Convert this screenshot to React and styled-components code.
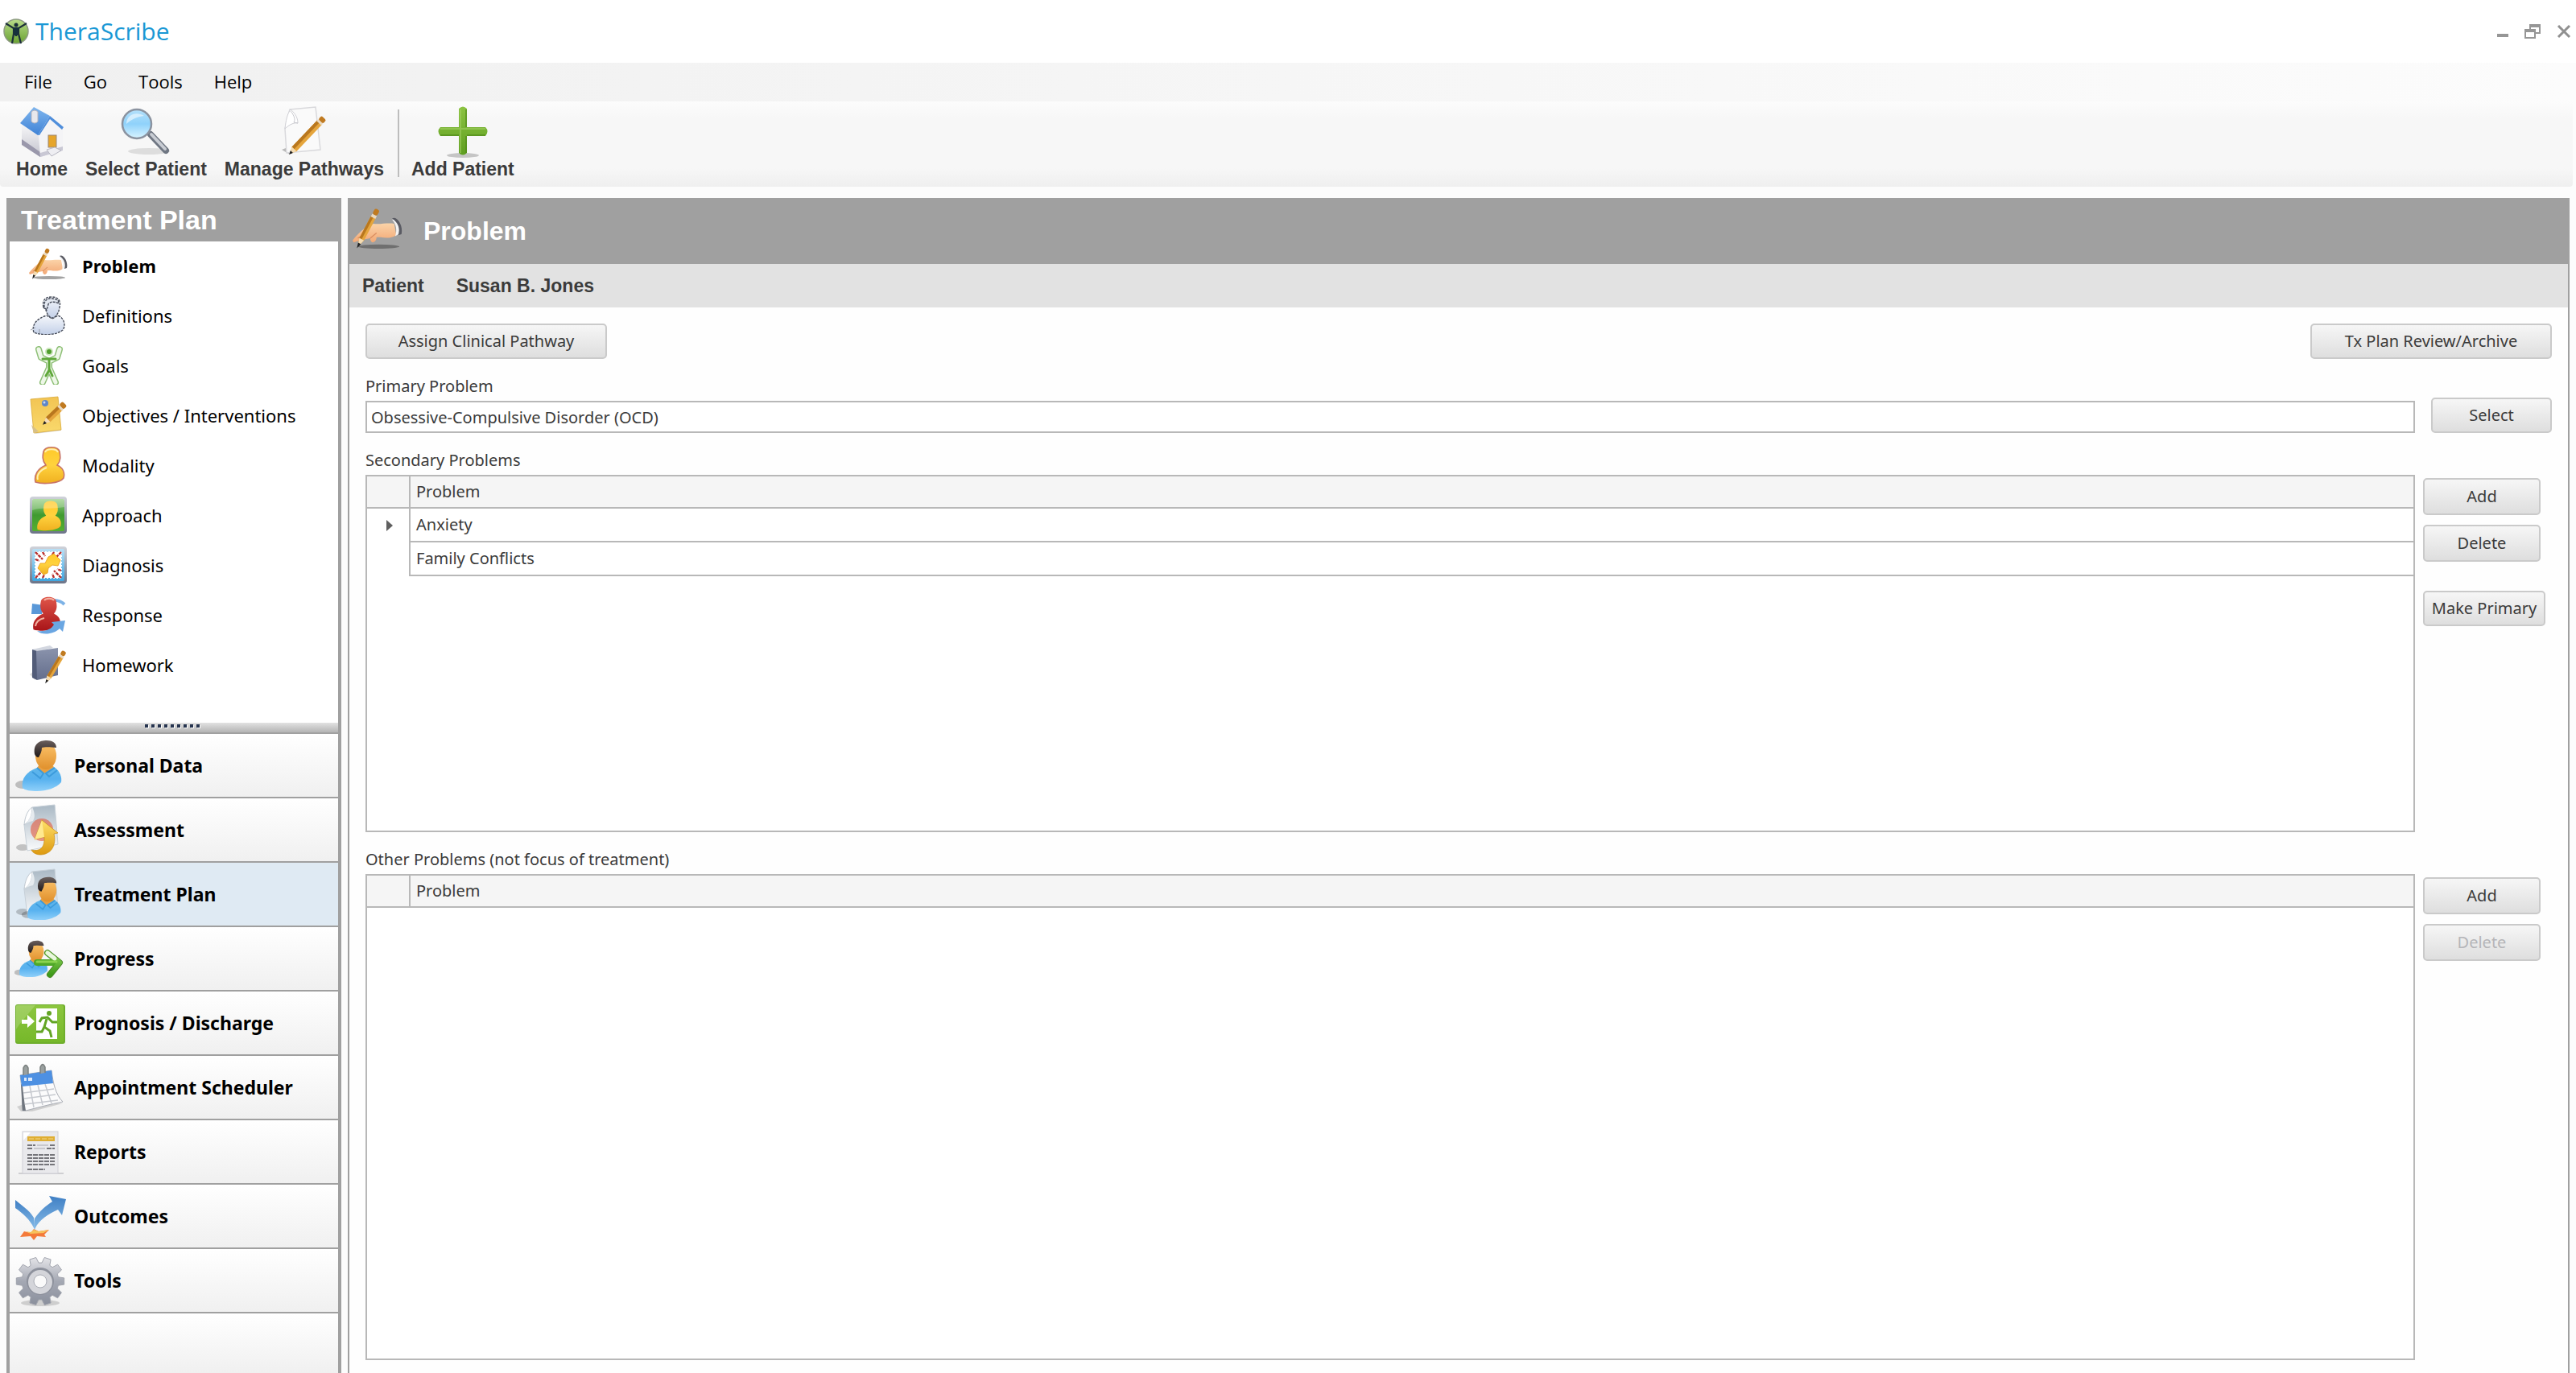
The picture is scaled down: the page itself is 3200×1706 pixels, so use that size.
import React from "react";
import styled, { createGlobalStyle, css } from "styled-components";

const GlobalStyle = createGlobalStyle`
  *, *::before, *::after { box-sizing: border-box; }
  body { margin: 0; background: #fcfcfc; }
  button, input { font: inherit; color: inherit; }
`;

const ui = '"Noto Sans", "Open Sans", sans-serif';
const arial = '"Liberation Sans", Arial, sans-serif';
const segoe = '"Open Sans", "Noto Sans", sans-serif';
const frame = "#a0a0a0";
const line = "#b8b8b8";

const Page = styled.div`
  min-height: 100vh;
  display: flex;
  flex-direction: column;
  background: #fcfcfc;
  font-family: ${ui};
  font-size: 20px;
  line-height: 28px;
  color: #3b3b3b;
`;

/* ---------- window chrome ---------- */
const TitleBar = styled.header`
  height: 78px;
  padding: 0 6px 0 4px;
  display: flex;
  align-items: center;
  gap: 8px;
  background: #fff;
`;
const AppName = styled.h1`
  margin: 0;
  flex: 1;
  font: 400 30px/40px ${segoe};
  color: #1a98d5;
`;
const WindowControls = styled.div`
  display: flex;
  gap: 20px;
`;
const WindowButton = styled.button`
  display: flex;
  padding: 0;
  border: 0;
  background: none;
`;
const MenuBar = styled.nav`
  height: 48px;
  padding: 0 0 2px 30px;
  display: flex;
  align-items: center;
  gap: 39px;
  background: linear-gradient(90deg, #f0f0f0, #fcfcfc);
`;
const MenuItem = styled.button`
  padding: 0;
  border: 0;
  background: none;
  font: 400 22px/30px ${segoe};
  color: #000;
`;
const ToolBar = styled.div`
  height: 106px;
  margin-right: 4px;
  padding: 6px 0 8px 9px;
  display: flex;
  border-radius: 0 0 4px 4px;
  background: linear-gradient(#fcfcfc, #f7f7f7 20%, #f7f7f7 78%, #efefef);
`;
const ToolButton = styled.button`
  padding: 0 11px;
  border: 0;
  background: none;
  display: flex;
  flex-direction: column;
  align-items: center;
  font: 700 23px/28px ${arial};
  color: #3b3b3b;
`;
const ToolDivider = styled.div`
  width: 2px;
  margin: 4px 4px 4px 6px;
  background: #bdbdbd;
`;

/* ---------- body ---------- */
const Workspace = styled.div`
  flex: 1;
  display: flex;
  gap: 8px;
  padding: 14px 8px 0;
`;
const Sidebar = styled.aside`
  width: 416px;
  display: flex;
  flex-direction: column;
  border: solid ${frame};
  border-width: 0 4px;
`;
const SidebarTitle = styled.h2`
  margin: 0;
  padding-left: 14px;
  background: ${frame};
  font: 700 34px/54px ${arial};
  color: #fff;
`;
const SectionList = styled.nav`
  height: 598px;
  background: #fff;
`;
const SectionItem = styled.button`
  width: 100%;
  height: 62px;
  padding: 0 0 2px 24px;
  border: 0;
  background: none;
  display: flex;
  align-items: center;
  gap: 18px;
  font: ${(p) => (p.$current ? 700 : 400)} 22px/28px ${ui};
  color: #000;
`;
const Splitter = styled.div`
  height: 14px;
  display: flex;
  justify-content: center;
  padding: 2px 4px 0 0;
  gap: 4px;
  border-bottom: 2px solid ${frame};
  background: linear-gradient(#e2e2e2, #b4b4b4);
`;
const Grip = styled.i`
  width: 4px;
  height: 4px;
  background: #26344f;
  box-shadow: 1px 1px 0 #fff;
`;
const ModuleItem = styled.button`
  width: 100%;
  height: 80px;
  padding: 0 0 0 6px;
  border: 0;
  border-bottom: 2px solid ${frame};
  background: ${(p) => (p.$current ? "#dfeaf3" : "linear-gradient(#fff, #f0f0f0)")};
  display: flex;
  align-items: center;
  gap: 10px;
  font: 700 23px/28px ${ui};
  color: #000;
`;
const SidebarFill = styled.div`
  flex: 1;
  background: linear-gradient(#fff, #f0f0f0);
`;

const Panel = styled.main`
  flex: 1;
  min-width: 0;
  display: flex;
  flex-direction: column;
  border: solid ${frame};
  border-width: 0 2px;
  background: #fefefe;
`;
const PanelHeader = styled.div`
  height: 82px;
  padding-left: 4px;
  display: flex;
  align-items: center;
  gap: 26px;
  background: ${frame};
`;
const PanelTitle = styled.h2`
  margin: 0;
  font: 700 32px/40px ${arial};
  color: #fff;
`;
const PatientBar = styled.div`
  height: 54px;
  padding-left: 16px;
  display: flex;
  align-items: center;
  gap: 40px;
  background: #e2e2e2;
  font: 700 23px/28px ${arial};
`;
const PanelBody = styled.div`
  flex: 1;
  padding: 20px 20px 16px;
  display: flex;
  flex-direction: column;
  gap: 20px;
`;
const ActionRow = styled.div`
  display: flex;
  justify-content: space-between;
`;
const sizes = {
  wide: css`width: 300px; height: 44px;`,
  select: css`width: 150px; height: 44px;`,
  side: css`width: 146px; height: 46px;`,
  primary: css`width: 152px; height: 44px; margin-top: 24px;`,
};
const PushButton = styled.button`
  ${(p) => sizes[p.$size]}
  padding: 0;
  border: 2px solid #cacaca;
  border-radius: 5px;
  background: linear-gradient(#f6f6f6, #dedede);
  white-space: nowrap;
  &:disabled { color: #b5b5b8; }
`;
const Field = styled.div`
  display: flex;
  flex-direction: column;
`;
const FieldRow = styled.div`
  display: flex;
  align-items: flex-end;
  gap: 20px;
`;
const TextBox = styled.input`
  flex: 1;
  min-width: 0;
  height: 40px;
  padding: 0 5px;
  border: 2px solid ${line};
  background: #fff;
`;
const GridSection = styled.section`
  display: flex;
  flex-direction: column;
  gap: 4px;
  ${(p) => (p.$fill ? "flex: 1;" : "height: 476px;")}
`;
const GridTitle = styled.h3`
  margin: 0;
  font: inherit;
`;
const GridRow = styled.div`
  flex: 1;
  display: flex;
  gap: 10px;
`;
const GridFrame = styled.div`
  flex: 1;
  border: 2px solid ${line};
  background: #fff;
`;
const GridActions = styled.div`
  width: 160px;
  padding-top: 4px;
  display: flex;
  flex-direction: column;
  gap: 12px;
`;
const Table = styled.table`
  width: 100%;
  border-collapse: separate;
  border-spacing: 0;
  table-layout: fixed;
`;
const HeadCell = styled.th`
  width: ${(p) => (p.$marker ? "54px" : "auto")};
  height: 40px;
  padding: 0 7px;
  border-bottom: 2px solid ${line};
  border-right: ${(p) => (p.$marker ? `2px solid ${line}` : "0")};
  background: #f5f5f5;
  font-weight: 400;
  text-align: left;
`;
const MarkerCell = styled.td`
  height: 42px;
  padding: 0 0 0 24px;
  border-right: 2px solid ${line};
  line-height: 0;
`;
const Cell = styled.td`
  height: 42px;
  padding: 0 7px;
  border-bottom: 2px solid ${line};
`;

/* ---------- drawings ---------- */
const Svg = styled.svg`
  display: block;
  flex: none;
`;
const HiddenDefs = styled.svg`
  position: absolute;
  width: 0;
  height: 0;
`;

const G = ({ id, a, b, c, h }) => (
  <linearGradient id={id} x1="0" y1="0" x2={h ? "1" : "0"} y2={h ? "0" : "1"}>
    <stop offset="0" stopColor={a} />
    {c && <stop offset=".5" stopColor={c} />}
    <stop offset="1" stopColor={b} />
  </linearGradient>
);
const Gradients = () => (
  <HiddenDefs aria-hidden="true">
    <defs>
      <G id="skin" a="#fdc56c" b="#e0902c" />
      <G id="hair" a="#6b5f5c" b="#1f1a1b" />
      <G id="shirt" a="#5fb6ea" c="#57b1ef" b="#8fd0fa" />
      <G id="sheet" a="#a9b8c4" b="#fafbfc" />
      <G id="gold" a="#ffe06a" b="#dd9a10" />
      <G id="pawn" a="#ffc928" c="#ffd23e" b="#f0b020" />
      <G id="green" a="#8fd65a" b="#3d9a18" />
      <G id="exit" a="#8cc63f" b="#76b82a" />
      <G id="roof" a="#7fb6ee" b="#3f82d6" />
      <G id="wall" a="#ffffff" b="#c3c3cd" />
      <G id="blue" a="#3f7fc4" b="#86bbe8" />
      <G id="lens" a="#b5e0fa" c="#8fd2fb" b="#d9f4ff" />
      <G id="plus" a="#8cc342" b="#5f9e20" />
      <G id="gear" a="#e4e4e8" c="#a4a8b3" b="#8a8f9c" />
      <G id="hand" a="#fbd3a8" b="#f2a875" />
      <G id="ghost" a="#f5f7fb" b="#c3d0e8" />
      <G id="note" a="#f2c453" b="#f9d96c" />
      <G id="book" a="#8a93ac" b="#646e8c" />
      <G id="redPawn" a="#e0564a" b="#a81418" />
      <G id="tile" a="#9bd08a" c="#3f9a30" b="#55b030" />
      <G id="tileEdge" a="#d0d3da" b="#6c7488" />
      <G id="sky" a="#b9dff5" b="#3fa6e0" />
      <G id="badge" a="#b9dc8a" b="#6aa232" />
    </defs>
  </HiddenDefs>
);

const Icon = ({ size = 64, box = 64, children }) => (
  <Svg width={size} height={size} viewBox={`0 0 ${box} ${box}`} aria-hidden="true">
    {children}
  </Svg>
);

const Pencil = ({ x1, y1, x2, y2, w = 6 }) => {
  const len = Math.hypot(x2 - x1, y2 - y1);
  const deg = (Math.atan2(y2 - y1, x2 - x1) * 180) / Math.PI;
  const r = w / 2;
  return (
    <g transform={`translate(${x1} ${y1}) rotate(${deg})`}>
      <path d={`M6 ${-r}H${len - 8}L${len} 0L${len - 8} ${r}H6z`} fill="#e5a53c" />
      <path d={`M6 0H${len - 8}V${r}H6z`} fill="#b9771e" />
      <path d={`M${len - 8} ${-r}L${len} 0L${len - 8} ${r}z`} fill="#f4dcb4" />
      <path d={`M${len - 3} ${-r / 3}L${len} 0L${len - 3} ${r / 3}z`} fill="#222" stroke="#222" />
      <rect x="4" y={-r} width="3" height={w} fill="#e9d9c0" />
      <rect x="-2" y={-r} width="6" height={w} rx="2" fill="#c07a20" />
    </g>
  );
};

const Bust = () => (
  <>
    <ellipse cx="10" cy="56" rx="9" ry="5" fill="#000" opacity=".22" />
    <path d="M10 60C8 48 15 40 28 35L49 34C57 39 59 47 58 53C52 60 40 64 28 64C20 64 13 63 10 60z" fill="url(#shirt)" />
    <path d="M28 35L37 42L49 34L46 31H31z" fill="#e8a043" />
    <path d="M28 35L36 42L32 48L22 40M50 35L39 42L43 46L53 38" fill="none" stroke="#3c9bdc" strokeWidth="2" />
    <ellipse cx="39" cy="20" rx="13" ry="17" fill="url(#skin)" />
    <path d="M25 18C23 5 31 1 40 1C47 1 52 4 52 10C44 9 37 9 34 10C34 15 32 18 30 22C27 22 26 20 25 18z" fill="url(#hair)" />
  </>
);
const Leaf = () => (
  <>
    <ellipse cx="10" cy="54" rx="8" ry="4" fill="#000" opacity=".2" />
    <path d="M22 4L50 1L54 50L16 58L12 26z" fill="url(#sheet)" stroke="#c7d0d8" />
    <path d="M22 4C22 13 20 20 12 26C13 16 16 8 22 4z" fill="#fff" stroke="#c0c8d0" />
    <path d="M22 4C25 10 26 16 23 21C19 22 15 23 12 26C20 19 22 12 22 4z" fill="#e6ebef" />
  </>
);

const PersonIcon = () => (
  <Icon><Bust /></Icon>
);
const AssessmentIcon = () => (
  <Icon>
    <Leaf />
    <circle cx="34" cy="32" r="14" fill="#e2583c" opacity=".6" />
    <path d="M34 20L54 36L49 37C52 50 47 62 33 63C27 63 23 61 21 57C30 59 38 56 37 41L25 44z" fill="url(#gold)" stroke="#c98c14" strokeWidth=".7" />
    <path d="M34 20L37 41L25 44z" fill="#ffe98f" />
  </Icon>
);
const PlanIcon = () => (
  <Icon>
    <Leaf />
    <g transform="translate(8 10) scale(.85)"><Bust /></g>
  </Icon>
);
const ProgressIcon = () => (
  <Icon>
    <g transform="translate(-1 9) scale(.72)"><Bust /></g>
    <path d="M41 25L56 37L44 52" fill="none" stroke="#4d8a2c" strokeWidth="8" strokeLinecap="round" strokeLinejoin="round" />
    <path d="M28 37H54" stroke="#4fa828" strokeWidth="8" strokeLinecap="round" />
    <path d="M41 25L56 37L44 52" fill="none" stroke="url(#green)" strokeWidth="6" strokeLinecap="round" strokeLinejoin="round" />
    <path d="M41 25L50 32" stroke="#e9f7de" strokeWidth="5" strokeLinecap="round" />
    <path d="M28 36H52" stroke="#8bd34f" strokeWidth="3" strokeLinecap="round" />
  </Icon>
);
const ExitIcon = () => (
  <Icon>
    <rect x="1" y="9" width="62" height="49" rx="3" fill="#6fae2c" />
    <rect x="2" y="10" width="59" height="46" rx="2" fill="url(#exit)" />
    <path d="M2 10H26L6 34L2 40z" fill="#fff" opacity=".18" />
    <rect x="27" y="14" width="26" height="38" fill="#fff" />
    <path d="M9 28H16V22L25 30L16 38V33H9z" fill="#fff" />
    <circle cx="43" cy="20" r="3" fill="#63a524" />
    <path d="M31 31L34 26L41 25L47 31H53M40 27L37 37L44 42L46 50M37 37L34 43H27" fill="none" stroke="#63a524" strokeWidth="3" />
  </Icon>
);
const CalendarIcon = () => (
  <Icon>
    <path d="M3 56L14 52L60 52L22 62L8 62z" fill="#000" opacity=".14" />
    <path d="M7 17L46 11C48 27 51 41 60 50C44 53 30 57 14 61L10 61C10 46 9 31 7 17z" fill="#fbfbfc" stroke="#a9adb5" />
    <path d="M8 28C9 40 9 52 10 61L14 61C12 50 11 39 10 30z" fill="#70767f" />
    <path d="M7 17L46 11L48 27L9 31z" fill="#4d90e2" />
    <path d="M12 22H15M17 22H22" stroke="#dce9fb" strokeWidth="4" />
    <path d="M11 39L49 34M12 46L51 41M13 53L54 48M19 30L24 57M29 29L35 54M38 28L46 52" stroke="#c6c9cf" strokeWidth="1.5" fill="none" />
    <path d="M11 17V8Q14 1 17 8V16M32 15V7Q35 0 38 7V14" fill="#9aa09f" stroke="#7b807f" strokeWidth="1.5" />
  </Icon>
);
const ReportIcon = () => (
  <Icon>
    <path d="M5 59H61" stroke="#cfcfd2" strokeWidth="2" />
    <rect x="10" y="7" width="44" height="52" fill="#e9e9ec" stroke="#cfcfd6" />
    <path d="M11 8H20L11 18z" fill="#fff" />
    <rect x="16" y="13" width="34" height="6" fill="#dfae33" />
    <path d="M18 16H48" stroke="#f2d88f" strokeDasharray="6 2" />
    <g stroke="#75757a" strokeWidth="2">
      <path d="M16 24H26M44 24H50M16 28H22M40 28H50M16 36H50M16 40H50M16 44H50M16 48H50M16 54H38" strokeDasharray="6 1" />
    </g>
    <path d="M28 24H42M24 28H38" stroke="#bdbdc2" strokeWidth="1.5" />
  </Icon>
);
const OutcomesIcon = () => (
  <Icon>
    <path d="M7 58L12 51L20 53L24 48L30 51L43 49L37 55L39 58L28 57L24 62L20 57z" fill="#f47a3a" />
    <path d="M14 51L20 52L24 49L30 51L43 49L36 53L20 54z" fill="#f6c25c" />
    <path d="M1 12C9 19 18 24 24 34L25 49C20 37 11 29 1 22z" fill="url(#blue)" />
    <path d="M25 49C24 44 24 39 25 35C31 26 39 19 47 14L43 7L64 11L59 31L54 24C42 29 29 38 25 49z" fill="url(#blue)" />
  </Icon>
);
const gearPath = (cx, cy, teeth, outer, inner) =>
  Array.from({ length: teeth }, (_, i) => {
    const step = (Math.PI * 2) / teeth;
    const at = (r, t) => `${(cx + r * Math.cos(t)).toFixed(1)} ${(cy + r * Math.sin(t)).toFixed(1)}`;
    const t = i * step;
    return `${i ? "L" : "M"}${at(inner, t - step * 0.36)}L${at(outer, t - step * 0.22)}L${at(outer, t + step * 0.22)}L${at(inner, t + step * 0.36)}`;
  }).join("") + "z";
const GearIcon = () => (
  <Icon>
    <ellipse cx="32" cy="60" rx="24" ry="4" fill="#000" opacity=".15" />
    <path d={gearPath(32, 33, 10, 30, 23)} fill="url(#gear)" stroke="#a2a5ae" strokeLinejoin="round" />
    <circle cx="32" cy="33" r="17" fill="#8d919c" />
    <circle cx="32" cy="34" r="15" fill="#d4d5da" />
    <circle cx="32" cy="33" r="8" fill="#fafafa" stroke="#a9acb5" />
  </Icon>
);

const HandIcon = ({ size = 48 }) => (
  <Icon size={size} box={48}>
    <ellipse cx="25" cy="39" rx="20" ry="2" fill="#333" opacity=".45" />
    <path d="M0 33C4 28 9 23 14 20L20 17C26 18 33 16 40 17L42 28C38 31 32 31 27 30L23 30C23 33 21 35 19 35C17 34 17 32 17 31C12 32 6 33 1 35z" fill="url(#hand)" />
    <path d="M17 31L23 26M5 31L13 26" stroke="#d98d60" />
    <path d="M38 13C42 18 43 23 41 29L44 27C46 22 44 16 41 13z" fill="#f3f3f3" />
    <path d="M38 12C42 9 49 18 47 27L44 28C46 22 44 16 38 12z" fill="#5a5b63" />
    <Pencil x1={23} y1={5} x2={5} y2={39} w={5} />
  </Icon>
);
const GhostIcon = () => (
  <Icon size={48} box={48}>
    <g fill="url(#ghost)" stroke="#454b58" strokeWidth="1.4" strokeDasharray="3 1.2">
      <path d="M6 45C3 36 9 28 22 24L29 28L36 24C44 27 46 37 42 42C34 49 15 49 6 45z" />
      <path d="M18 14C16 4 21 1 28 1C36 1 40 5 38 14C37 21 33 27 29 27C25 27 22 21 21 17z" />
      <path d="M19 14C18 5 23 2 29 3C34 4 37 4 37 9C31 6 26 7 24 10L22 17z" fill="#e3e8f1" />
    </g>
    <path d="M2 42L8 39M13 46V41" stroke="#9aa0ab" />
  </Icon>
);
const GoalsIcon = () => (
  <Icon size={48} box={48}>
    <g fill="none" strokeLinecap="round" strokeLinejoin="round">
      <path d="M12 4L15 14L25 19L35 14L38 4M25 19V27L17 45M25 27L33 45" stroke="#8fc078" strokeWidth="8" />
      <path d="M12 4L15 14L25 19L35 14L38 4M25 19V27L17 45M25 27L33 45" stroke="#eef7e8" strokeWidth="5" />
      <path d="M17 16H33M25 17V30L21 37M25 28L29 37" stroke="#5fa83a" strokeWidth="3" />
    </g>
    <circle cx="25" cy="7" r="5" fill="#cbe6bb" />
    <circle cx="25" cy="7" r="3" fill="#4f9e2c" />
  </Icon>
);
const NoteIcon = () => (
  <Icon size={48} box={48}>
    <path d="M5 40L40 38L40 43L8 47z" fill="#000" opacity=".15" />
    <path d="M2 4L36 1L40 42L6 46z" fill="url(#note)" stroke="#d9a93a" strokeWidth=".8" />
    <path d="M3 36L6 46L12 44z" fill="#d7c089" />
    <circle cx="20" cy="9" r="4" fill="#5f86c8" />
    <circle cx="19" cy="8" r="1.5" fill="#c5d7f4" />
    <Pencil x1={43} y1={11} x2={18} y2={35} w={8} />
  </Icon>
);
const pawn = "M21 24C16 18 17 12 18 7C20 0 36 0 38 7C39 13 40 18 35 24C42 27 45 33 43 40C38 47 17 48 8 45C6 36 11 28 21 24z";
const ModalityIcon = () => (
  <Icon size={48} box={48}>
    <path d={pawn} fill="url(#pawn)" stroke="#c77468" strokeWidth="1.6" />
    <path d="M11 42C9 36 14 30 22 27M20 8C22 3 34 3 36 8" fill="none" stroke="#ffeeb0" strokeWidth="2" />
  </Icon>
);
const Tile = ({ fill }) => (
  <>
    <rect x="1" y="1" width="46" height="46" rx="4" fill="url(#tileEdge)" />
    <rect x="4" y="4" width="40" height="40" rx="2" fill={fill} />
  </>
);
const ApproachIcon = () => (
  <Icon size={48} box={48}>
    <Tile fill="url(#tile)" />
    <g transform="translate(4 5) scale(.82)"><path d={pawn} fill="url(#pawn)" /></g>
    <path d="M4 4H44V14C30 17 15 14 4 18z" fill="#fff" opacity=".25" />
  </Icon>
);
const DiagnosisIcon = () => (
  <Icon size={48} box={48}>
    <Tile fill="url(#sky)" />
    <rect x="8" y="8" width="32" height="32" fill="#fff" stroke="#fff" strokeWidth="2" strokeDasharray="2 2" />
    <g stroke="#b8302e" strokeWidth="2.4" strokeDasharray="4 1">
      <path d="M8 8L17 17M40 8L31 17M8 40L17 31M40 40L31 31M17 8L20 13M31 8L28 13M8 17L13 19M40 31L35 29M31 40L29 35M17 40L19 36" />
    </g>
    <path d="M24 14L31 10L39 18L36 25L29 24L24 28L23 34L18 36L11 28L14 22L20 22z" fill="url(#pawn)" stroke="#eda928" />
  </Icon>
);
const ResponseIcon = () => (
  <Icon size={48} box={48}>
    <path d="M44 11C38 5 26 3 15 12" fill="none" stroke="#7db2e6" strokeWidth="4" />
    <path d="M4 10L18 12L16 23L3 23z" fill="#5a98d8" />
    <g transform="translate(-2 0) scale(.94)"><path d={pawn} fill="url(#redPawn)" /></g>
    <path d="M19 6C21 3 29 3 31 6M8 38C9 32 14 29 19 28" fill="none" stroke="#f2b1a2" strokeWidth="2" />
    <path d="M10 44C20 45 28 42 31 36L28 33L45 31L42 45L38 41C31 48 17 50 10 44z" fill="#6aa6e2" />
  </Icon>
);
const HomeworkIcon = () => (
  <Icon size={48} box={48}>
    <path d="M1 36L8 30V43z" fill="#000" opacity=".15" />
    <path d="M4 5L26 0L30 3L10 8z" fill="#d3d7e0" />
    <path d="M4 5L10 7V43L4 40z" fill="#525c78" />
    <path d="M9 7L36 3V37L10 43z" fill="url(#book)" />
    <Pencil x1={43} y1={9} x2={21} y2={46} w={6} />
  </Icon>
);

const HomeIcon = () => (
  <Icon>
    <path d="M7 24L22 16L42 16L58 28V54L30 63L7 47z" fill="url(#wall)" />
    <path d="M7 41L30 57V63L7 48z" fill="#9a98ab" />
    <path d="M28 36L42 15L58 29V55L30 63z" fill="#f4f4f6" />
    <path d="M30 58L58 50V55L30 63z" fill="#c9c8d4" />
    <path d="M5 21L22 1L42 12L27 36z" fill="url(#roof)" />
    <path d="M42 12L59 26L57 29L42 16L29 36H27z" fill="#4f8edb" />
    <path d="M19 7Q23 3 27 7V19Q23 23 19 19z" fill="#e8e8ec" stroke="#b4b4be" />
    <rect x="40" y="36" width="10" height="15" fill="#e6a52a" stroke="#9a8878" />
    <path d="M38 54L48 51L56 55L44 62z" fill="#eeeef2" stroke="#b7b7c2" />
  </Icon>
);
const SearchIcon = () => (
  <Icon>
    <ellipse cx="36" cy="56" rx="26" ry="4" fill="#000" opacity=".1" />
    <path d="M38 35L57 55" stroke="#6f7682" strokeWidth="8" strokeLinecap="round" />
    <path d="M39 35L56 53" stroke="#c8ccd3" strokeWidth="4" strokeLinecap="round" />
    <ellipse cx="21" cy="22" rx="18" ry="18" fill="url(#lens)" stroke="#8b93a0" strokeWidth="2.5" />
    <path d="M8 22C8 10 21 6 30 12C21 13 13 17 8 22z" fill="#fff" opacity=".55" />
  </Icon>
);
const PathwayIcon = () => (
  <Icon>
    <path d="M4 54L14 50V60z" fill="#000" opacity=".25" />
    <path d="M14 4L46 1L52 54L10 58L8 28z" fill="#fafafa" stroke="#d9d9dc" strokeWidth="1.5" />
    <path d="M15 4C22 10 24 16 24 21C19 20 13 23 8 28C9 18 11 9 15 4z" fill="#fff" stroke="#cfcfd4" />
    <path d="M15 6C20 12 21 17 19 20L24 21" fill="none" stroke="#c7c7cc" />
    <Pencil x1={55} y1={16} x2={14} y2={59} w={8} />
  </Icon>
);
const PlusIcon = () => (
  <Icon>
    <ellipse cx="32" cy="61" rx="20" ry="3" fill="#000" opacity=".2" />
    <path d="M27 3Q32 -2 37 3V26H60Q65 31 60 37H37V58Q32 63 27 58V37H4Q-1 31 4 26H27z" fill="url(#plus)" />
    <path d="M29 4V58M4 28H60" stroke="#a9d56a" strokeWidth="2" opacity=".5" />
    <path d="M36 4V26M36 37V58M4 36H27M37 36H60" stroke="#4f8a1a" strokeWidth="2" opacity=".6" />
  </Icon>
);
const LogoIcon = () => (
  <Icon size={32} box={32}>
    <ellipse cx="16" cy="16" rx="15" ry="15" fill="url(#badge)" stroke="#8c9a80" strokeWidth="1.5" />
    <path d="M3 6L13 12V19L11 31M29 6L19 12V19L22 31M16 16V22" fill="none" stroke="#1c2f3a" strokeWidth="2.2" />
    <path d="M12 11H20L18 21H14z" fill="#16303c" />
    <circle cx="16" cy="8" r="2.5" fill="#1c2f3a" />
  </Icon>
);

/* ---------- data ---------- */
const menus = ["File", "Go", "Tools", "Help"];
const tools = [
  ["Home", HomeIcon],
  ["Select Patient", SearchIcon],
  ["Manage Pathways", PathwayIcon],
];
const sections = [
  ["Problem", HandIcon],
  ["Definitions", GhostIcon],
  ["Goals", GoalsIcon],
  ["Objectives / Interventions", NoteIcon],
  ["Modality", ModalityIcon],
  ["Approach", ApproachIcon],
  ["Diagnosis", DiagnosisIcon],
  ["Response", ResponseIcon],
  ["Homework", HomeworkIcon],
];
const modules = [
  ["Personal Data", PersonIcon],
  ["Assessment", AssessmentIcon],
  ["Treatment Plan", PlanIcon],
  ["Progress", ProgressIcon],
  ["Prognosis / Discharge", ExitIcon],
  ["Appointment Scheduler", CalendarIcon],
  ["Reports", ReportIcon],
  ["Outcomes", OutcomesIcon],
  ["Tools", GearIcon],
];

const ProblemGrid = ({ title, rows, fill, children }) => (
  <GridSection $fill={fill}>
    <GridTitle>{title}</GridTitle>
    <GridRow>
      <GridFrame>
        <Table aria-label={title}>
          <thead>
            <tr>
              <HeadCell $marker />
              <HeadCell scope="col">Problem</HeadCell>
            </tr>
          </thead>
          <tbody>
            {rows.map((name, i) => (
              <tr key={name}>
                <MarkerCell>
                  {i === 0 && (
                    <Svg width="8" height="14" viewBox="0 0 8 14" aria-hidden="true">
                      <path d="M0 0L8 7L0 14z" fill="#5f5f5f" />
                    </Svg>
                  )}
                </MarkerCell>
                <Cell>{name}</Cell>
              </tr>
            ))}
          </tbody>
        </Table>
      </GridFrame>
      <GridActions>{children}</GridActions>
    </GridRow>
  </GridSection>
);

export default function App() {
  return (
    <Page>
      <GlobalStyle />
      <Gradients />
      <TitleBar>
        <LogoIcon />
        <AppName>TheraScribe</AppName>
        <WindowControls>
          <WindowButton aria-label="Minimize">
            <Svg width="14" height="18"><path d="M0 12H14V16H0z" fill="#969696" /></Svg>
          </WindowButton>
          <WindowButton aria-label="Restore">
            <Svg width="20" height="18">
              <path d="M7 6V2H19V11H14" fill="none" stroke="#969696" strokeWidth="2" />
              <path d="M6 0H20V4H6zM0 6H14V10H0z" fill="#969696" />
              <path d="M1 9V17H13V9" fill="none" stroke="#969696" strokeWidth="2" />
            </Svg>
          </WindowButton>
          <WindowButton aria-label="Close">
            <Svg width="18" height="18"><path d="M2 2L16 16M16 2L2 16" stroke="#909090" strokeWidth="3" /></Svg>
          </WindowButton>
        </WindowControls>
      </TitleBar>
      <MenuBar>
        {menus.map((m) => <MenuItem key={m}>{m}</MenuItem>)}
      </MenuBar>
      <ToolBar>
        {tools.map(([name, Pic]) => (
          <ToolButton key={name}><Pic />{name}</ToolButton>
        ))}
        <ToolDivider />
        <ToolButton><PlusIcon />Add Patient</ToolButton>
      </ToolBar>

      <Workspace>
        <Sidebar>
          <SidebarTitle>Treatment Plan</SidebarTitle>
          <SectionList>
            {sections.map(([name, Pic], i) => (
              <SectionItem key={name} $current={i === 0}><Pic />{name}</SectionItem>
            ))}
          </SectionList>
          <Splitter>
            {Array.from({ length: 9 }, (_, i) => <Grip key={i} />)}
          </Splitter>
          {modules.map(([name, Pic]) => (
            <ModuleItem key={name} $current={name === "Treatment Plan"}><Pic />{name}</ModuleItem>
          ))}
          <SidebarFill />
        </Sidebar>

        <Panel>
          <PanelHeader>
            <HandIcon size={62} />
            <PanelTitle>Problem</PanelTitle>
          </PanelHeader>
          <PatientBar>
            <span>Patient</span>
            <span>Susan B. Jones</span>
          </PatientBar>
          <PanelBody>
            <ActionRow>
              <PushButton $size="wide">Assign Clinical Pathway</PushButton>
              <PushButton $size="wide">Tx Plan Review/Archive</PushButton>
            </ActionRow>
            <Field>
              <label htmlFor="primary-problem">Primary Problem</label>
              <FieldRow>
                <TextBox id="primary-problem" defaultValue="Obsessive-Compulsive Disorder (OCD)" />
                <PushButton $size="select">Select</PushButton>
              </FieldRow>
            </Field>
            <ProblemGrid title="Secondary Problems" rows={["Anxiety", "Family Conflicts"]}>
              <PushButton $size="side">Add</PushButton>
              <PushButton $size="side">Delete</PushButton>
              <PushButton $size="primary">Make Primary</PushButton>
            </ProblemGrid>
            <ProblemGrid title="Other Problems (not focus of treatment)" rows={[]} fill>
              <PushButton $size="side">Add</PushButton>
              <PushButton $size="side" disabled>Delete</PushButton>
            </ProblemGrid>
          </PanelBody>
        </Panel>
      </Workspace>
    </Page>
  );
}
